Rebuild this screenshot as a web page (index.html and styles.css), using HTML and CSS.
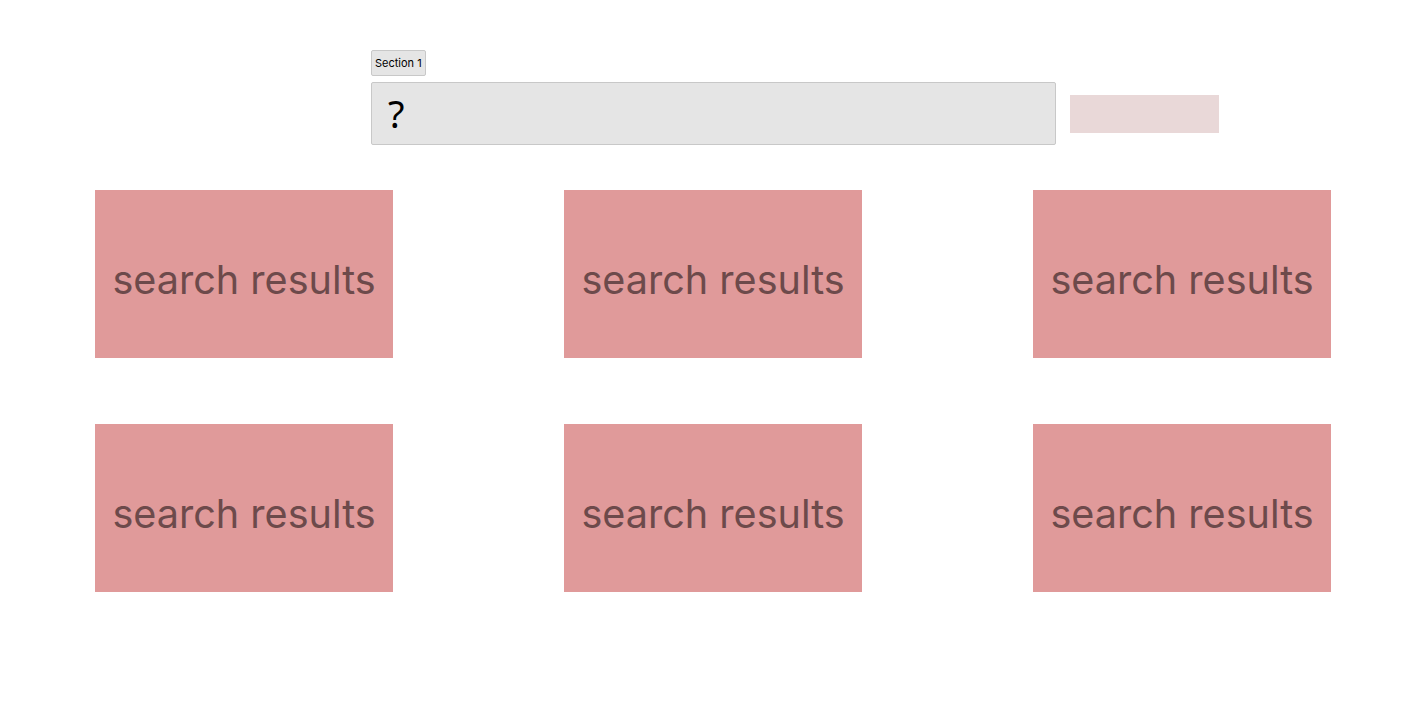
FILE: index.html
```html
<!DOCTYPE html>
<html>
<head>
<meta charset="utf-8">
<link rel="stylesheet" href="styles.css">
</head>
<body>
<div class="top">
  <button class="section-btn">Section 1</button>
  <div class="search-row">
    <div class="search-box">?</div>
    <div class="search-btn"></div>
  </div>
</div>
<div class="grid">
  <div class="card">search results</div>
  <div class="card">search results</div>
  <div class="card">search results</div>
  <div class="card">search results</div>
  <div class="card">search results</div>
  <div class="card">search results</div>
</div>
</body>
</html>
```
FILE: styles.css
```css
html, body {
  margin: 0;
  padding: 0;
  background: #fff;
  font-family: Inter, "Noto Sans", sans-serif;
}
.top {
  padding-top: 50px;
  padding-left: 371px;
}
.section-btn {
  display: block;
  box-sizing: border-box;
  height: 26px;
  padding: 0 3px;
  font-family: Inter, sans-serif;
  font-size: 11px;
  color: #000;
  background: #e5e5e5;
  border: 1px solid #c8c8c8;
  border-radius: 2px;
}
.search-row {
  display: flex;
  align-items: center;
  gap: 14px;
  margin-top: 6px;
}
.search-box {
  box-sizing: border-box;
  width: 685px;
  height: 63px;
  background: #e5e5e5;
  border: 1px solid #c8c8c8;
  border-radius: 2px;
  padding-left: 16px;
  font-family: "Noto Sans", Inter, sans-serif;
  font-size: 38px;
  line-height: 61px;
  color: #000;
}
.search-btn {
  width: 149px;
  height: 38px;
  background: #e9d8d8;
}
.grid {
  display: grid;
  grid-template-columns: repeat(3, 298px);
  justify-content: space-between;
  row-gap: 66px;
  margin: 45px 95px 0;
}
.card {
  box-sizing: border-box;
  height: 168px;
  padding-top: 11px;
  background: #e09a9a;
  display: flex;
  align-items: center;
  justify-content: center;
  font-family: Inter, sans-serif;
  font-size: 39.6px;
  color: #6d4a4b;
}
```
